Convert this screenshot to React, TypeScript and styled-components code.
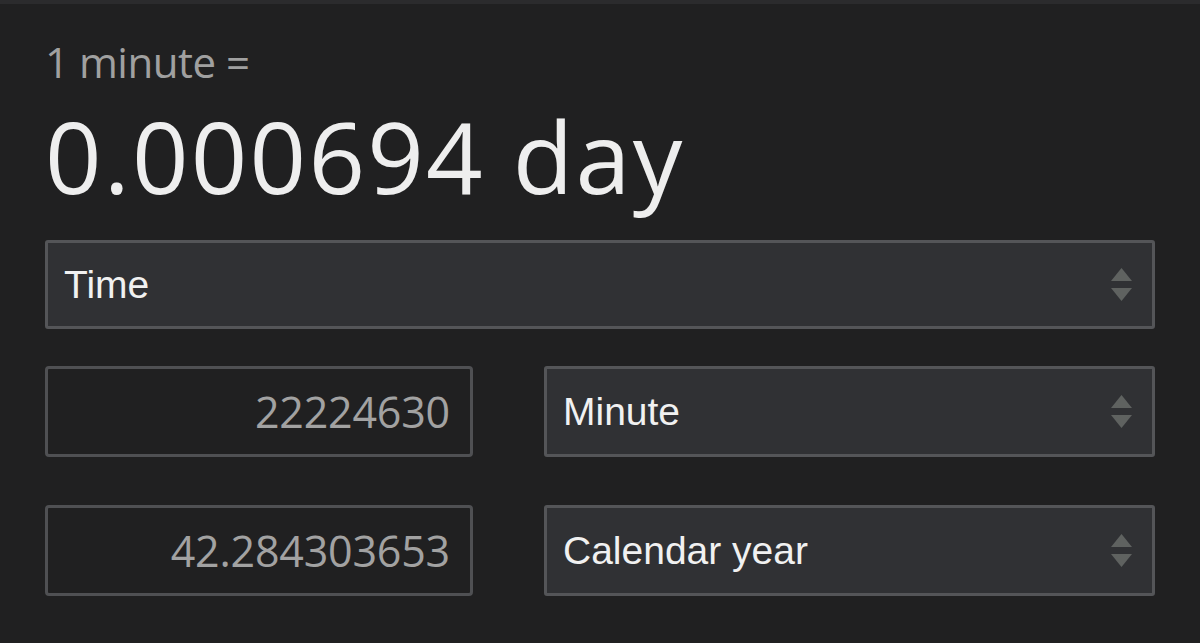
import styled, { createGlobalStyle } from "styled-components";

const GlobalStyle = createGlobalStyle`
    html, body {
        margin: 0;
        padding: 0;
        background: #202021;
    }
    body {
        font-family: "Open Sans", "Liberation Sans", sans-serif;
    }
`;

const Page = styled.div`
    box-sizing: border-box;
    width: 1200px;
    height: 643px;
    border-top: 4px solid #2b2b2d;
    padding: 33px 45px 0 45px;
    display: flex;
    flex-direction: column;
`;

const Caption = styled.div`
    font-size: 42px;
    line-height: 50px;
    color: #a0a0a0;
    letter-spacing: -0.5px;
`;

const Result = styled.div`
    margin-top: 19px;
    font-size: 99px;
    line-height: 100px;
    color: #eeeeee;
    letter-spacing: 2.2px;
`;

const Row = styled.div<{ $top: number }>`
    display: grid;
    grid-template-columns: 428px 611px;
    column-gap: 71px;
    margin-top: ${p => p.$top}px;
    height: 91px;
`;

const SelectBox = styled.div<{ $height?: number }>`
    box-sizing: border-box;
    height: ${p => p.$height ?? 91}px;
    width: 100%;
    background: #303134;
    border: 3px solid #545558;
    border-radius: 3px;
    display: flex;
    align-items: center;
    justify-content: space-between;
    padding: 0 20px 0 16px;
    font-family: "Liberation Sans", Arial, sans-serif;
    font-size: 39px;
    color: #f1f1f1;
`;

const NumberBox = styled.div`
    box-sizing: border-box;
    height: 91px;
    background: #202021;
    border: 3px solid #4f5053;
    border-radius: 4px;
    display: flex;
    align-items: center;
    justify-content: flex-end;
    padding: 0 20px 0 16px;
    font-size: 43px;
    color: #a2a2a2;
    letter-spacing: -0.2px;
`;

function Arrows() {
    return (
        <svg width="21" height="34" viewBox="0 0 21 34">
            <polygon points="10.5,0 21,13 0,13" fill="#5f6260" />
            <polygon points="0,20 21,20 10.5,33" fill="#5f6260" />
        </svg>
    );
}

function Select({ label, height }: { label: string; height?: number }) {
    return (
        <SelectBox $height={height}>
            <span>{label}</span>
            <Arrows />
        </SelectBox>
    );
}

export default function App() {
    return (
        <Page>
            <GlobalStyle />
            <Caption>1 minute =</Caption>
            <Result>0.000694 day</Result>
            <div style={{ marginTop: 34 }}>
                <Select label="Time" height={89} />
            </div>
            <Row $top={37}>
                <NumberBox>22224630</NumberBox>
                <Select label="Minute" />
            </Row>
            <Row $top={48}>
                <NumberBox>42.284303653</NumberBox>
                <Select label="Calendar year" />
            </Row>
        </Page>
    );
}
